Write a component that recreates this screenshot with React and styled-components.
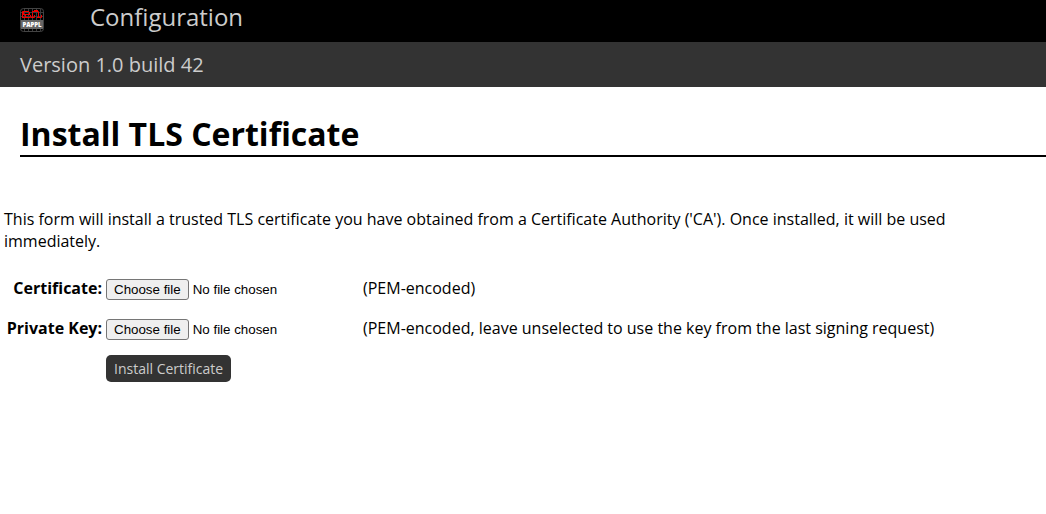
import React, { useState } from "react";
import styled, { createGlobalStyle } from "styled-components";

const GlobalStyle = createGlobalStyle`
  body {
    margin: 0;
    background: #fff;
    color: #000;
    font: 16px/22px "Open Sans", "Noto Sans", sans-serif;
  }
`;

const Header = styled.header`
  display: flex;
  align-items: center;
  gap: 46px;
  padding: 0 20px 2px;
  background: #000;
`;

const LogoLink = styled.a`
  display: flex;
`;

const NavLink = styled.a`
  padding-bottom: 6px;
  color: #ccc;
  font-size: 24px;
  line-height: 34px;
  text-decoration: none;
`;

const VersionBar = styled.div`
  padding: 9px 20px 8px;
  background: #333;
  color: #ccc;
  font-size: 20px;
  line-height: 28px;
`;

const Title = styled.h1`
  margin: 26px 0 51px 20px;
  border-bottom: 2px solid #000;
  font-size: 32px;
  line-height: 42px;
`;

const Content = styled.main`
  padding: 0 4px;
`;

const Intro = styled.p`
  margin: 0 0 25px;
`;

const Fields = styled.div`
  display: grid;
  grid-template-columns: 98px 253px 1fr;
  column-gap: 4px;
  row-gap: 16px;
  align-items: start;
`;

const Label = styled.label`
  font-weight: bold;
  text-align: right;
  white-space: nowrap;
`;

const Picker = styled.div`
  display: grid;
  align-items: center;
  padding: 2px 0 1px;
  font-family: "Liberation Sans", Arial, sans-serif;
  font-size: smaller;
  line-height: 15px;
`;

const FileInput = styled.input`
  grid-area: 1 / 1;
  z-index: 1;
  width: 100%;
  margin: 0;
  opacity: 0;
`;

const PickerFace = styled.span`
  grid-area: 1 / 1;
  display: flex;
  align-items: center;
  gap: 4px;
`;

const ChooseFile = styled.span`
  padding: 2px 7px;
  border: 1px solid #767676;
  border-radius: 3px;
  background: #efefef;

  ${FileInput}:focus-visible + ${PickerFace} & {
    outline: 2px solid #000;
  }
`;

const Submit = styled.button`
  display: block;
  margin: 14px 0 0 102px;
  padding: 4px 8px;
  border: 0;
  border-radius: 5px;
  background: #333;
  color: #ccc;
  font: 14px/19px "Open Sans", "Noto Sans", sans-serif;
`;

function Logo() {
  return (
    <svg width="24" height="24" viewBox="0 0 24 24" role="img" aria-label="PAPPL">
      <rect x="0.5" y="0.5" width="23" height="23" rx="3" fill="#000" stroke="#444" />
      <path d="M4.5 1V23M8.5 1V23M12.5 1V23M16.5 1V23M20.5 1V23M1 4.5H23M1 8.5H23" stroke="#3a3a3a" />
      <path
        d="M2.5 10V3.5H9M3.5 3V7M2 6.5H10M5.5 6V9M2 9.500H10.5V7M9.500 4V7M12.5 10V4.500M12 3.500H18.500V9M14 2.500H18M11 9.500H14.500V7M17 9.500H21.500V7"
        fill="none"
        stroke="#f00000"
      />
      <rect x="1" y="12" width="22" height="9" fill="#666" />
      <text x="12" y="19" textAnchor="middle" fontFamily="Open Sans" fontWeight="800" fontSize="6" fill="#fff">PAPPL</text>
    </svg>
  );
}

function FilePicker({ id }) {
  const [fileName, setFileName] = useState("");
  return (
    <Picker>
      <FileInput
        id={id}
        name={id}
        type="file"
        onChange={(event) => setFileName(event.target.files[0]?.name ?? "")}
      />
      <PickerFace aria-hidden="true">
        <ChooseFile>Choose file</ChooseFile>
        <span>{fileName || "No file chosen"}</span>
      </PickerFace>
    </Picker>
  );
}

function FileRow({ id, label, hint }) {
  return (
    <>
      <Label htmlFor={id}>{label}:</Label>
      <FilePicker id={id} />
      <span>{hint}</span>
    </>
  );
}

export default function App() {
  return (
    <>
      <GlobalStyle />
      <Header>
        <LogoLink href="#home"><Logo /></LogoLink>
        <NavLink href="#config">Configuration</NavLink>
      </Header>
      <VersionBar>Version 1.0 build 42</VersionBar>
      <Title>Install TLS Certificate</Title>
      <Content>
        <Intro>
          This form will install a trusted TLS certificate you have obtained from a Certificate
          Authority ('CA'). Once installed, it will be used immediately.
        </Intro>
        <form onSubmit={(event) => event.preventDefault()}>
          <Fields>
            <FileRow id="certificate" label="Certificate" hint="(PEM-encoded)" />
            <FileRow
              id="privatekey"
              label="Private Key"
              hint="(PEM-encoded, leave unselected to use the key from the last signing request)"
            />
          </Fields>
          <Submit type="submit">Install Certificate</Submit>
        </form>
      </Content>
    </>
  );
}
